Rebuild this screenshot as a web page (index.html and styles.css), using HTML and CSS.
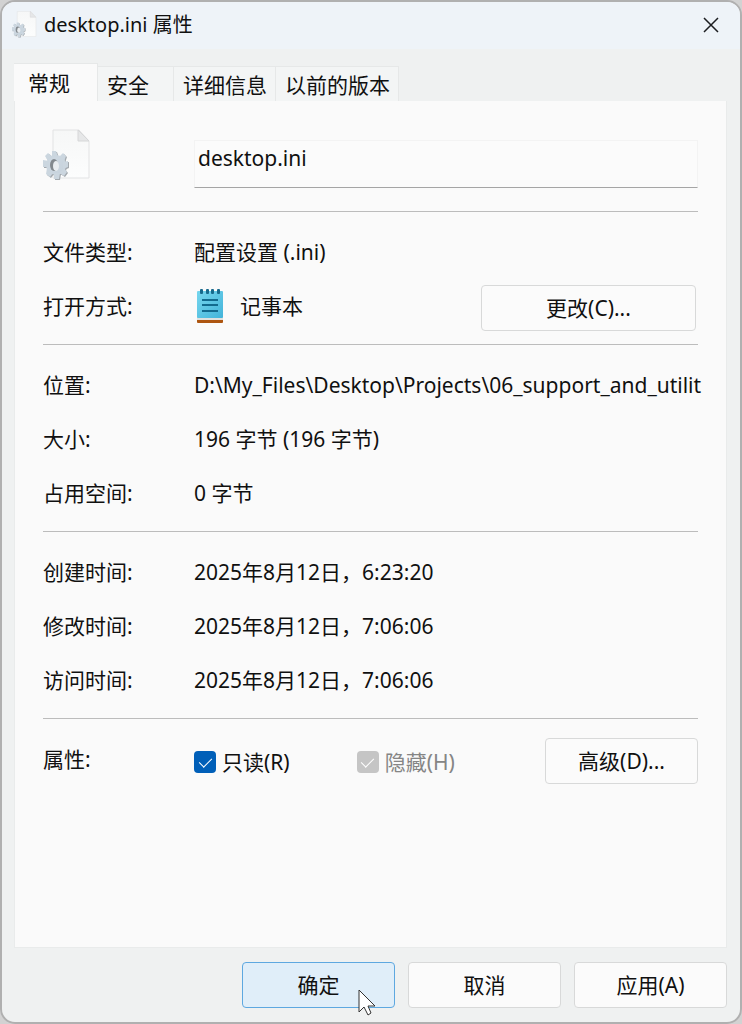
FILE: index.html
```html
<!DOCTYPE html>
<html lang="zh-CN">
<head>
    <meta charset="UTF-8">
    <meta name="viewport" content="width=device-width, initial-scale=1.0">
    <title>desktop.ini 属性</title>
    <link rel="stylesheet" href="styles.css">
</head>
<body>
    <svg class="defs" width="0" height="0" aria-hidden="true">
        <defs>
            <linearGradient id="paper" x1="0" y1="0" x2="0" y2="1">
                <stop offset="0" stop-color="#f6f7f7"/>
                <stop offset="1" stop-color="#fcfdfd"/>
            </linearGradient>
            <linearGradient id="metal" x1="0" y1="0" x2="1" y2="1">
                <stop offset="0" stop-color="#cfd9e2"/>
                <stop offset="1" stop-color="#c6d2dc"/>
            </linearGradient>
            <linearGradient id="pad" x1="0" y1="0" x2="1" y2="1">
                <stop offset="0" stop-color="#76d6ee"/>
                <stop offset="1" stop-color="#43b4da"/>
            </linearGradient>
            <symbol id="ini-file" viewBox="0 0 48 52">
                <path d="M10 1H36L46 12V49H10Z" fill="url(#paper)" stroke="#e2e3e4"/>
                <path d="M35 1L46 12H35Z" fill="#e6e7e8" stroke="#d6d7d8"/>
                <g transform="translate(13 36)">
                    <g fill="#a3a9ae" transform="translate(1 1)">
                        <circle r="10"/>
                        <path id="teeth" d="M-4-14H0L2-8H-4ZM-2 8H4L3 14H-2ZM-13-5L-7-4V2L-13 2ZM7-3L12-4V2L7 4ZM-11-9L-8-12L-3-8L-8-4ZM3-8L7-12L10-9L8-3ZM-9 3L-3 8L-6 12L-10 9ZM8 3L11 7L8 11L3 8Z"/>
                    </g>
                    <circle r="10" fill="url(#metal)"/>
                    <use href="#teeth" fill="#cbd6df"/>
                    <ellipse rx="4" ry="6" cx="-2" fill="#83898e"/>
                    <ellipse rx="3" ry="5" cx="0" cy="1" fill="#e9edf0"/>
                </g>
            </symbol>
        </defs>
    </svg>

    <main class="window">
        <header class="titlebar">
            <svg class="title-icon" aria-hidden="true"><use href="#ini-file"/></svg>
            <h1>desktop.ini 属性</h1>
            <button class="close" type="button" aria-label="关闭">
                <svg width="16" height="16" viewBox="0 0 16 16" fill="none" stroke="#1c1d20" stroke-width="1.5"><path d="M1 1L15 15M15 1L1 15"/></svg>
            </button>
        </header>

        <form class="dialog">
            <div class="tabs" role="tablist">
                <button class="tab active" type="button" role="tab" aria-selected="true">常规</button>
                <button class="tab" type="button" role="tab" aria-selected="false">安全</button>
                <button class="tab" type="button" role="tab" aria-selected="false">详细信息</button>
                <button class="tab" type="button" role="tab" aria-selected="false">以前的版本</button>
            </div>

            <div class="panel" role="tabpanel">
                <section class="name-row">
                    <svg class="file-icon" aria-hidden="true"><use href="#ini-file"/></svg>
                    <input class="name" type="text" value="desktop.ini" aria-label="文件名">
                </section>

                <section class="group">
                    <div class="row">
                        <span class="label">文件类型:</span>
                        <span class="value">配置设置 (.ini)</span>
                    </div>
                    <div class="row">
                        <span class="label">打开方式:</span>
                        <span class="value app">
                            <svg width="28" height="36" viewBox="0 0 28 36" aria-hidden="true">
                                <rect x="1" y="30" width="26" height="5" rx="1" fill="#ad5510"/>
                                <rect x="1" y="28" width="26" height="4" fill="#dfe0de"/>
                                <rect x="1" y="3" width="26" height="27" rx="1" fill="url(#pad)"/>
                                <g fill="#17698c">
                                    <rect x="4" y="1" width="3" height="5" rx="1"/>
                                    <rect x="10" y="1" width="3" height="5" rx="1"/>
                                    <rect x="15" y="1" width="3" height="5" rx="1"/>
                                    <rect x="21" y="1" width="3" height="5" rx="1"/>
                                </g>
                                <path d="M6 12H22M6 17H22M6 23H22" stroke="#126a8e" stroke-width="2"/>
                            </svg>
                            记事本
                        </span>
                        <button class="btn change" type="button">更改(C)...</button>
                    </div>
                </section>

                <section class="group">
                    <div class="row">
                        <span class="label">位置:</span>
                        <span class="value">D:\My_Files\Desktop\Projects\06_support_and_utilit</span>
                    </div>
                    <div class="row">
                        <span class="label">大小:</span>
                        <span class="value">196 字节 (196 字节)</span>
                    </div>
                    <div class="row">
                        <span class="label">占用空间:</span>
                        <span class="value">0 字节</span>
                    </div>
                </section>

                <section class="group">
                    <div class="row">
                        <span class="label">创建时间:</span>
                        <span class="value">2025年8月12日，6:23:20</span>
                    </div>
                    <div class="row">
                        <span class="label">修改时间:</span>
                        <span class="value">2025年8月12日，7:06:06</span>
                    </div>
                    <div class="row">
                        <span class="label">访问时间:</span>
                        <span class="value">2025年8月12日，7:06:06</span>
                    </div>
                </section>

                <section class="group">
                    <div class="row">
                        <span class="label">属性:</span>
                        <span class="checks">
                            <label class="check" for="readonly"><input type="checkbox" id="readonly" checked>只读(R)</label>
                            <label class="check disabled" for="hidden"><input type="checkbox" id="hidden" checked disabled>隐藏(H)</label>
                        </span>
                        <button class="btn" type="button">高级(D)...</button>
                    </div>
                </section>
            </div>

            <footer class="actions">
                <button class="btn primary" type="button">确定
                    <svg class="cursor" width="19" height="28" viewBox="0 0 19 28" aria-hidden="true"><path d="M1 1V23L6 18L10 26L13 24L10 17H17Z" fill="#fff" stroke="#333" stroke-linejoin="round"/></svg>
                </button>
                <button class="btn" type="button">取消</button>
                <button class="btn" type="button">应用(A)</button>
            </footer>
        </form>
    </main>
</body>
</html>
```
FILE: styles.css
```css
* {
    box-sizing: border-box;
}
body {
    margin: 0;
    background-color: #d2d2d2;
    color: #101010;
    font-family: "Noto Sans", "Noto Sans CJK SC", sans-serif;
    font-size: 21px;
    line-height: 28px;
}
button, input {
    font: inherit;
    color: inherit;
}
.defs {
    position: absolute;
}
.window {
    display: flex;
    flex-direction: column;
    min-height: 100vh;
    border: 2px solid #b0b0b0;
    border-radius: 15px;
    background-color: #eff1f1;
    overflow: hidden;
}
.titlebar {
    display: flex;
    align-items: center;
    height: 47px;
    padding: 0 21px 2px 10px;
    background-color: #eef3f8;
}
.titlebar h1 {
    flex: 1;
    margin: 0 0 0 7px;
    font-size: 20px;
    font-weight: normal;
}
.title-icon {
    width: 25px;
    height: 27px;
}
.close {
    display: flex;
    padding: 0;
    border: none;
    background: none;
}
.dialog {
    flex: 1;
    display: flex;
    flex-direction: column;
    padding: 14px 13px 14px 12px;
}
.tabs {
    display: flex;
    align-items: flex-end;
}
.tab {
    height: 35px;
    padding: 0 8px 0 9px;
    border: 1px solid #e6e8e8;
    border-width: 1px 1px 0 0;
    background-color: #f3f5f5;
    text-align: left;
    line-height: 36px;
    min-width: 76px;
}
.tab.active {
    width: 84px;
    height: 38px;
    padding: 0 14px;
    background-color: #fafafa;
}
.panel {
    flex: 1;
    padding: 28px;
    border: 1px solid #e9ebeb;
    border-top: none;
    background-color: #fafafa;
}
.name-row {
    display: flex;
    align-items: flex-start;
    height: 82px;
}
.file-icon {
    flex: none;
    width: 48px;
    height: 52px;
    margin-right: 103px;
}
.name {
    flex: 1;
    min-width: 0;
    height: 48px;
    margin-top: 11px;
    padding: 0 3px 12px;
    border: 1px solid #f3f3f3;
    border-bottom-color: #a5a5a5;
    background-color: #fbfbfb;
}
.group {
    padding: 13px 0 11px;
    border-top: 1px solid #bcbcbc;
}
.row {
    display: flex;
    align-items: center;
    height: 54px;
}
.label {
    flex: none;
    width: 151px;
}
.value {
    flex: 1;
    min-width: 0;
    white-space: nowrap;
}
.app {
    display: flex;
    align-items: center;
    gap: 16px;
    padding-left: 2px;
}
.btn {
    flex: none;
    width: 153px;
    height: 46px;
    padding: 0;
    border: 1px solid #d8d9d9;
    border-radius: 4px;
    background-color: #fbfbfb;
}
.row .btn {
    margin-top: 3px;
}
.change {
    width: 215px;
    margin-right: 2px;
}
.checks {
    flex: 1;
    display: flex;
    gap: 67px;
    padding-top: 6px;
}
.check {
    display: flex;
    align-items: center;
    gap: 6px;
}
.check input {
    appearance: none;
    display: flex;
    justify-content: center;
    width: 22px;
    height: 22px;
    margin: 0;
    border-radius: 4px;
    background-color: #005fb8;
}
.check input:checked::before {
    content: "";
    width: 6px;
    height: 11px;
    margin-top: 4px;
    border: solid #fff;
    border-width: 0 1px 1px 0;
    transform: rotate(45deg);
}
.check.disabled {
    color: #858585;
}
.check.disabled input {
    background-color: #c5c5c5;
}
.actions {
    display: flex;
    justify-content: flex-end;
    gap: 13px;
    padding-top: 14px;
}
.primary {
    position: relative;
    border-color: #5ea8e0;
    background-color: #e0eef9;
}
/* pointer resting on the default button */
.cursor {
    position: absolute;
    left: 115px;
    top: 26px;
}
```
